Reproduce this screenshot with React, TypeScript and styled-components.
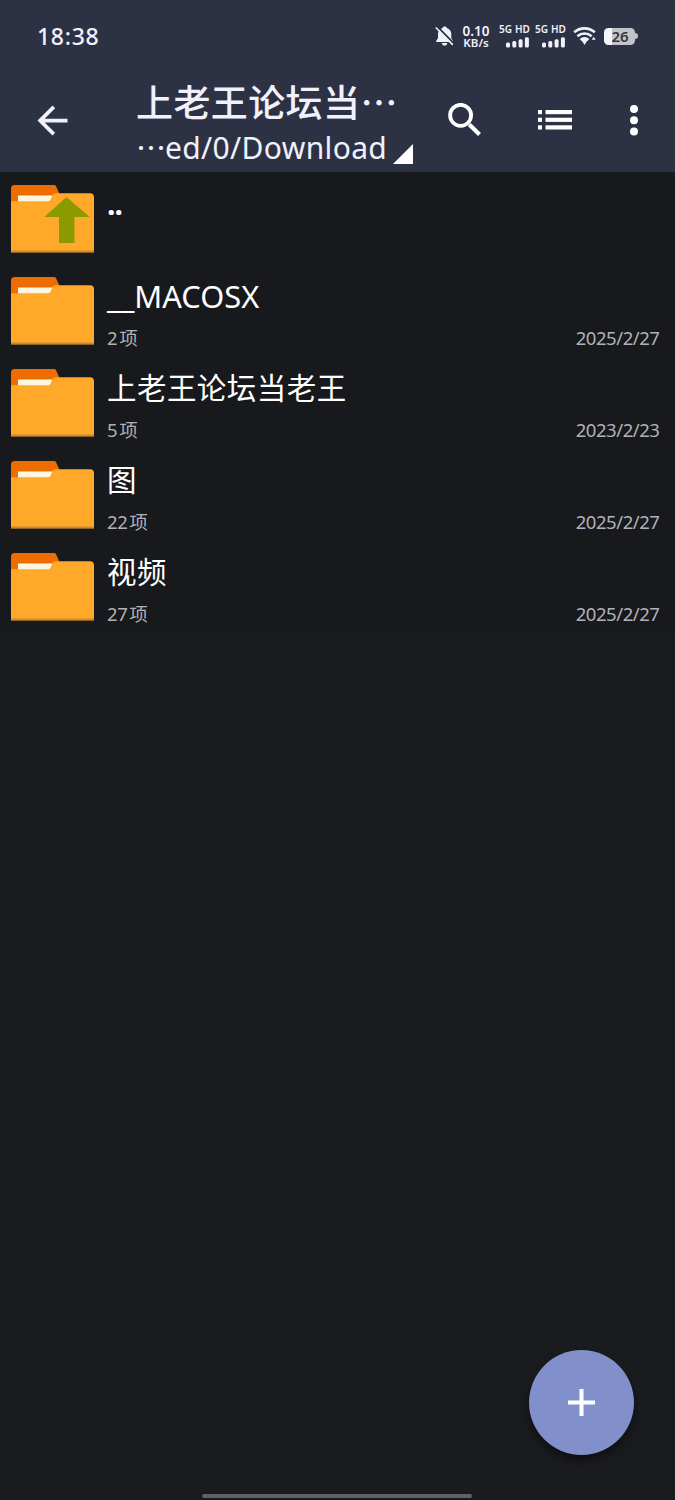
import React from "react";
import styled, { createGlobalStyle } from "styled-components";

const GlobalStyle = createGlobalStyle`
  *, *::before, *::after { box-sizing: border-box; }
  body { margin: 0; background: #1a1b1f; }
  svg { display: block; flex: none; }
`;

const LATIN = `"Noto Sans", "Noto Sans CJK SC", sans-serif`;
const CJK = `"Noto Sans CJK SC", "Noto Sans", sans-serif`;

const Screen = styled.div`
  position: relative;
  width: 675px;
  height: 1500px;
  display: flex;
  flex-direction: column;
  background: #1a1b1f;
  color: #fff;
  font-family: ${LATIN};
  overflow: hidden;
`;

const Header = styled.header`
  height: 173px;
  background: #2d3144;
  border-bottom: 1px solid #1d1f29;
  color: #f0f1fb;
`;

const StatusBar = styled.div`
  height: 72px;
  padding: 0 37px;
  display: flex;
  align-items: center;
  justify-content: space-between;
`;

const Clock = styled.div`
  font-size: 23px;
  font-weight: 500;
  line-height: 32px;
  letter-spacing: 0.7px;
  margin-top: -1px;
`;

const StatusIcons = styled.div`
  display: flex;
  align-items: center;
`;

const NetSpeed = styled.div`
  width: 30px;
  margin: 2px 0 0 7px;
  display: flex;
  flex-direction: column;
  align-items: center;
  font-weight: 600;
  white-space: nowrap;
`;

const SpeedValue = styled.span`
  font-size: 13.5px;
  line-height: 11px;
`;

const SpeedUnit = styled.span`
  font-size: 11.5px;
  line-height: 12px;
`;

const Sim = styled.div<{ $gap: number }>`
  width: 32px;
  height: 23px;
  margin-left: ${(p) => p.$gap}px;
  display: flex;
  flex-direction: column;
  align-items: flex-start;
  justify-content: space-between;
`;

const SimLabel = styled.span`
  margin-top: -1px;
  font-size: 10px;
  font-weight: 600;
  line-height: 10px;
  white-space: nowrap;
  word-spacing: 0.4px;
`;

const BarsBox = styled.div`
  margin-left: 7px;
`;

const WifiBox = styled.div`
  margin: 0 7px 0 6px;
`;

const Battery = styled.div`
  width: 31px;
  height: 17px;
  margin-top: 1px;
  border-radius: 4.5px;
  background: linear-gradient(90deg, #f4f5fb 0 8px, #c3c4c9 8px);
  color: #34363c;
  font-size: 15px;
  font-weight: 600;
  line-height: 17px;
  text-align: center;
  padding-left: 1px;
`;

const BatteryNub = styled.div`
  width: 3px;
  height: 6px;
  border-radius: 0 3px 3px 0;
  background: #c3c4c9;
`;

const Toolbar = styled.div`
  height: 100px;
  display: flex;
  align-items: flex-start;
  padding: 8px 22px 0 29px;
`;

const ToolButton = styled.button<{ $width: number; $left?: number }>`
  width: ${(p) => p.$width}px;
  height: 80px;
  margin-left: ${(p) => p.$left ?? 0}px;
  padding: 0;
  border: 0;
  background: none;
  color: #fff;
  display: flex;
  align-items: center;
  justify-content: center;
`;

const PathPicker = styled.div`
  width: 282px;
  margin-left: 61px;
  white-space: nowrap;
`;

const Title = styled.div`
  height: 44px;
  font-family: ${CJK};
  font-size: 37px;
  font-weight: 500;
  line-height: 42px;
  letter-spacing: 0.4px;
`;

const SubtitleLine = styled.div`
  display: flex;
  align-items: flex-end;
  height: 44px;
`;

const Subtitle = styled.div`
  display: flex;
  height: 44px;
  font-size: 30px;
  line-height: 47px;
  letter-spacing: 0.35px;
`;

const Dots = styled.span`
  width: 29px;
  font-family: ${CJK};
  line-height: 44px;
  letter-spacing: 0;
`;

const Corner = styled.svg`
  margin: 0 0 4px 6px;
`;

const List = styled.main`
  background: #17191d;
  margin-top: -1px;
`;

const Row = styled.div`
  height: 92px;
  display: flex;
  padding: 13px 15.5px 0 11px;
`;

const RowBody = styled.div`
  flex: 1;
  margin-left: 13px;
  display: flex;
  flex-direction: column;
`;

const Name = styled.div<{ $kind: "up" | "latin" | "cjk" }>`
  height: 49px;
  font-size: ${(p) => ({ up: 30, latin: 30.8, cjk: 29.5 })[p.$kind]}px;
  font-weight: ${(p) => (p.$kind === "up" ? 700 : 400)};
  line-height: 38px;
  letter-spacing: ${(p) => ({ up: -1, latin: 0, cjk: 0.45 })[p.$kind]}px;
  white-space: nowrap;
`;

const Meta = styled.div`
  display: flex;
  justify-content: space-between;
  color: #b1b2b5;
  font-size: 18.5px;
  line-height: 24px;
  letter-spacing: -0.45px;
`;

const Unit = styled.span`
  margin-left: 2px;
`;

const Fab = styled.button`
  position: absolute;
  left: 529px;
  top: 1350px;
  width: 105px;
  height: 105px;
  padding: 0;
  border: 0;
  border-radius: 50%;
  background: #8190ca;
  box-shadow: 0 5px 9px rgba(0, 0, 0, 0.45);
  display: flex;
  align-items: center;
  justify-content: center;
`;

const HomeIndicator = styled.div`
  width: 270px;
  height: 4px;
  margin: auto auto 2px 202px;
  border-radius: 2px;
  background: #606165;
`;

const MutedBell = () => (
  <svg width="19" height="20" viewBox="0 0 19 20">
    <path
      d="M9.700 .6c-1.200 0-1.900.6-2.100 1.400C4.900 3 3 5.200 3 8v4.200L1.300 14.400v1.600h16.500v-1.600L16.300 12.200V8c0-2.800-1.700-5-4.500-6-.2-.8-.9-1.400-2.100-1.400zM6.800 17h5.600c-.3 1.600-1.400 2.600-2.800 2.600S7.100 18.600 6.800 17z"
      fill="#f0f1fb"
    />
    <path d="M2 .3l17 17.300" stroke="#2d3144" strokeWidth="1.900" />
    <path d="M.8 1.500l17 17.400" stroke="#f0f1fb" strokeWidth="1.700" />
  </svg>
);

const SignalBars = () => (
  <svg width="24" height="11" viewBox="0 0 24 11" fill="#f0f1fb">
    <rect x="0" y="5.500" width="4" height="5" rx="1.500" />
    <rect x="6.300" y="4" width="4" height="6.500" rx="1.500" />
    <rect x="12.600" y="2.200" width="4" height="8.300" rx="1.500" />
    <rect x="18.900" y="0.300" width="4" height="10.200" rx="1.500" />
  </svg>
);

const Wifi = () => (
  <svg width="24" height="20" viewBox="0 0 24 20" fill="none" stroke="#f0f1fb" strokeWidth="2.600">
    <path d="M1.200 6.300a15.500 15.500 0 0 1 20.600 0" />
    <path d="M4.400 10.300a10.500 10.500 0 0 1 14.200 0" />
    <path d="M7.600 14a5.600 5.600 0 0 1 7.800 0" />
    <path d="M8.200 13.800a5 5 0 0 1 6.600 0L11.500 18.900z" fill="#f0f1fb" stroke="none" />
    <path d="M20.700 10.800l2 2.900h-4z" fill="#f0f1fb" stroke="none" />
  </svg>
);

const BackIcon = () => (
  <svg width="45" height="45" viewBox="0 0 24 24" fill="#f0f1fb">
    <path d="M20 11H7.830l5.590-5.590L12 4l-8 8 8 8 1.410-1.410L7.830 13H20v-2z" />
  </svg>
);

const SearchIcon = () => (
  <svg width="34" height="34" viewBox="0 0 34 34" fill="none" stroke="#fff">
    <circle cx="12.600" cy="12.300" r="10.500" strokeWidth="3.800" />
    <path d="M21.300 21.600L31.500 31.400" strokeWidth="4.200" />
  </svg>
);

const ListIcon = () => (
  <svg width="34" height="20" viewBox="0 0 34 20" fill="#fff">
    {[0, 7.7, 15.3].map((y) => (
      <g key={y}>
        <rect x="0" y={y} width="4" height="4.200" />
        <rect x="7.500" y={y} width="26.500" height="4.200" />
      </g>
    ))}
  </svg>
);

const MoreIcon = () => (
  <svg width="8" height="31" viewBox="0 0 8 31" fill="#fff">
    <circle cx="4" cy="4" r="4" />
    <circle cx="4" cy="15.200" r="4" />
    <circle cx="4" cy="26.400" r="4" />
  </svg>
);

const FolderIcon = ({ up }: { up?: boolean }) => (
  <svg width="83" height="68" viewBox="0 0 83 68">
    <path d="M0 20V3.500Q0 0 3.500 0H43q1.600 0 2.200 1.400L48.500 9v11z" fill="#ef6c00" />
    <path d="M7 10.500h36L40 17H7z" fill="#fff8e1" />
    <path
      d="M0 16.300h37q2 0 2.700-1.700l1.500-4.200Q42.200 8.200 44.500 8.200H79q4 0 4 4v55H0z"
      fill="#ffa829"
    />
    <path d="M0 65.500h83v2H0z" fill="#cc8a30" />
    {up && <path d="M55.500 12L78.700 32H63.500v26H48V32H33.300z" fill="#8b9a00" />}
  </svg>
);

interface Entry {
  name: string;
  kind: "up" | "latin" | "cjk";
  count?: number;
  date?: string;
}

const entries: Entry[] = [
  { name: "..", kind: "up" },
  { name: "__MACOSX", kind: "latin", count: 2, date: "2025/2/27" },
  { name: "上老王论坛当老王", kind: "cjk", count: 5, date: "2023/2/23" },
  { name: "图", kind: "cjk", count: 22, date: "2025/2/27" },
  { name: "视频", kind: "cjk", count: 27, date: "2025/2/27" },
];

export default function App() {
  return (
    <Screen lang="zh-CN">
      <GlobalStyle />
      <Header>
        <StatusBar>
          <Clock>18:38</Clock>
          <StatusIcons>
            <MutedBell />
            <NetSpeed>
              <SpeedValue>0.10</SpeedValue>
              <SpeedUnit>KB/s</SpeedUnit>
            </NetSpeed>
            {[8, 4].map((gap) => (
              <Sim key={gap} $gap={gap}>
                <SimLabel>5G HD</SimLabel>
                <BarsBox>
                  <SignalBars />
                </BarsBox>
              </Sim>
            ))}
            <WifiBox>
              <Wifi />
            </WifiBox>
            <Battery>26</Battery>
            <BatteryNub />
          </StatusIcons>
        </StatusBar>
        <Toolbar>
          <ToolButton $width={46} aria-label="Back">
            <BackIcon />
          </ToolButton>
          <PathPicker>
            <Title>上老王论坛当…</Title>
            <SubtitleLine>
              <Subtitle>
                <Dots>…</Dots>
                <span>ed/0/Download</span>
              </Subtitle>
              <Corner width="20" height="20" viewBox="0 0 20 20">
                <path d="M20 0v20H0z" fill="#fff" />
              </Corner>
            </SubtitleLine>
          </PathPicker>
          <ToolButton $width={60} $left={17} aria-label="Search">
            <SearchIcon />
          </ToolButton>
          <ToolButton $width={60} $left={30} aria-label="View">
            <ListIcon />
          </ToolButton>
          <ToolButton $width={38} $left={30} aria-label="More">
            <MoreIcon />
          </ToolButton>
        </Toolbar>
      </Header>
      <List>
        {entries.map((e) => (
          <Row key={e.name}>
            <FolderIcon up={e.kind === "up"} />
            <RowBody>
              <Name $kind={e.kind}>{e.name}</Name>
              {e.count !== undefined && (
                <Meta>
                  <span>
                    {e.count}
                    <Unit>项</Unit>
                  </span>
                  <span>{e.date}</span>
                </Meta>
              )}
            </RowBody>
          </Row>
        ))}
      </List>
      <HomeIndicator />
      <Fab aria-label="Add">
        <svg width="27" height="27" viewBox="0 0 27 27" stroke="#fff" strokeWidth="4">
          <path d="M13.500 0v27M0 13.500h27" />
        </svg>
      </Fab>
    </Screen>
  );
}
